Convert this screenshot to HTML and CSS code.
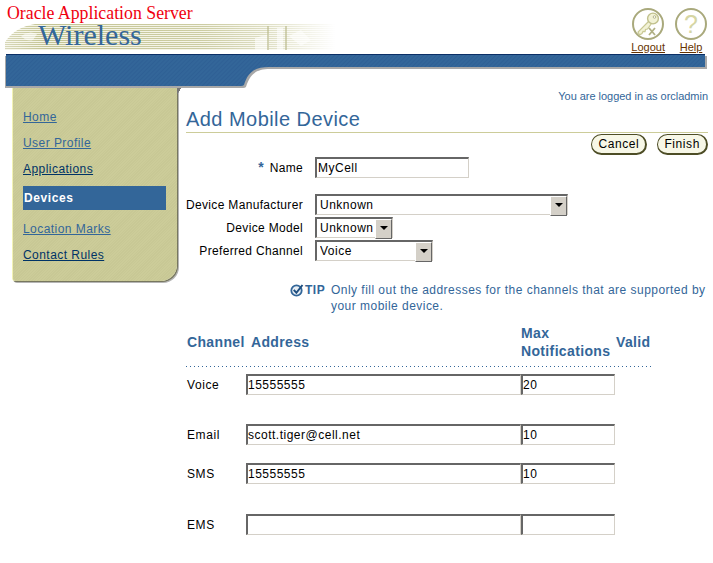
FILE: index.html
```html
<!DOCTYPE html>
<html lang="en">
<head>
<meta charset="utf-8">
<title>Add Mobile Device</title>
<link rel="stylesheet" href="styles.css">
</head>
<body>
<header class="masthead">
  <div class="brand">
    <div class="brand-oracle">Oracle Application Server</div>
    <div class="brand-band">
      <svg class="band-art" width="330" height="26" viewBox="0 0 330 26" aria-hidden="true">
        <path d="M0 0H30Q10 3 0 18Z" fill="#fff"/>
        <path d="M16 12Q24 6 32 10L28 16Q22 18 16 12Z" fill="#fff" opacity=".55"/>
        <path d="M250 26V14l14-4v16zM272 4h6v22h-6zM284 12l12-6 10 10-10 6z" fill="#fff" opacity=".55"/>
        <path d="M262 2h2v24h-2zM280 2h2v24h-2z" fill="#b9b98a" opacity=".6"/>
      </svg>
      <span class="brand-product">Wireless</span>
    </div>
  </div>
  <nav class="global-nav">
    <a class="global-link" href="#">
      <svg class="global-icon" width="32" height="32" viewBox="0 0 32 32" aria-hidden="true">
        <circle cx="16" cy="16" r="15" fill="#fff" stroke="#a9a97c" stroke-width="2"/>
        <path d="M16.5 13.5 6 24l1.5 3 2.5-1.5 1-2 2 .2.5-2.2 2-.5 4-5.5" fill="#f2f2d6" stroke="#c8c894" stroke-width="1.2"/>
        <circle cx="21" cy="10.5" r="5.4" fill="#f2f2d6" stroke="#c0c08c" stroke-width="1.4"/>
        <circle cx="22.5" cy="9" r="1.3" fill="#fff" stroke="#b5b58c"/>
        <path d="m17 20 6 7m0-7-6 7" stroke="#b0b084" stroke-width="1.8" fill="none"/>
      </svg>
      <span>Logout</span>
    </a>
    <a class="global-link" href="#">
      <svg class="global-icon" width="32" height="32" viewBox="0 0 32 32" aria-hidden="true">
        <circle cx="16" cy="16" r="15" fill="#fff" stroke="#a9a97c" stroke-width="2"/>
        <text x="16" y="25" text-anchor="middle" class="help-mark">?</text>
      </svg>
      <span>Help</span>
    </a>
  </nav>
</header>

<svg class="banner" width="713" height="34" viewBox="0 0 713 34" aria-hidden="true">
  <defs>
    <pattern id="weave" width="3" height="3" patternUnits="userSpaceOnUse" patternTransform="rotate(45)">
      <rect width="3" height="3" fill="#336699"/>
      <rect width="1" height="3" fill="#2f6095"/>
    </pattern>
  </defs>
  <path d="M5 2H707V15H270C256 15 250 20 246 33Q245 34 243 34H5Z" fill="#a8a8a8"/>
  <path d="M6 1H705V13H269C255 13 248 18 244 31Q243 32 241 32H6Z" fill="url(#weave)"/>
  <path d="M6 .5H705" stroke="#0b2f66" fill="none"/>
</svg>

<div class="page">
  <aside class="sidebar">
    <ul class="side-list">
      <li><a class="side-link" href="#">Home</a></li>
      <li><a class="side-link" href="#">User Profile</a></li>
      <li><a class="side-link visited" href="#">Applications</a></li>
      <li class="side-current">Devices</li>
      <li><a class="side-link" href="#">Location Marks</a></li>
      <li><a class="side-link visited" href="#">Contact Rules</a></li>
    </ul>
  </aside>

  <main class="content">
    <p class="login-note">You are logged in as orcladmin</p>
    <h1 class="title">Add Mobile Device</h1>
    <div class="actions">
      <button class="pill pill-cancel" type="button">Cancel</button>
      <button class="pill pill-finish" type="button">Finish</button>
    </div>

    <form class="device-form">
      <div class="field name-field">
        <label class="field-label"><span class="req">*</span> Name</label>
        <input class="box name-input" type="text" value="MyCell">
      </div>
      <div class="field">
        <label class="field-label">Device Manufacturer</label>
        <div class="select-wrap maker"><select class="box-select"><option>Unknown</option></select></div>
      </div>
      <div class="field">
        <label class="field-label">Device Model</label>
        <div class="select-wrap model"><select class="box-select"><option>Unknown</option></select></div>
      </div>
      <div class="field">
        <label class="field-label">Preferred Channel</label>
        <div class="select-wrap channel"><select class="box-select"><option>Voice</option></select></div>
      </div>
    </form>

    <div class="tip">
      <div class="tip-head">
        <svg width="14" height="14" viewBox="0 0 14 14" aria-hidden="true">
          <circle cx="6.5" cy="7.5" r="5.2" fill="#e8eef4" stroke="#336699" stroke-width="1.8"/>
          <path d="m3.8 6.8 2.6 3L12.5 2" fill="none" stroke="#1f4f80" stroke-width="2"/>
        </svg>
        <b>TIP</b>
      </div>
      <p class="tip-text">Only fill out the addresses for the channels that are supported by your mobile device.</p>
    </div>

    <div class="channels">
      <div class="ch-head">
        <span class="ch-title">Channel</span>
        <span class="ch-title">Address</span>
        <span class="ch-title">Max<br>Notifications</span>
        <span class="ch-title">Valid</span>
      </div>
      <div class="ch-row row-voice">
        <span>Voice</span>
        <input class="box" type="text" value="15555555">
        <input class="box" type="text" value="20">
      </div>
      <div class="ch-row row-email">
        <span>Email</span>
        <input class="box" type="text" value="scott.tiger@cell.net">
        <input class="box" type="text" value="10">
      </div>
      <div class="ch-row row-sms">
        <span>SMS</span>
        <input class="box" type="text" value="15555555">
        <input class="box" type="text" value="10">
      </div>
      <div class="ch-row row-ems">
        <span>EMS</span>
        <input class="box" type="text" value="">
        <input class="box" type="text" value="">
      </div>
    </div>
  </main>
</div>
</body>
</html>
```
FILE: styles.css
```css
* { box-sizing: border-box; }
html, body { margin: 0; padding: 0; background: #fff; }
body {
  width: 713px;
  height: 563px;
  overflow: hidden;
  font-family: "Liberation Sans", Arial, sans-serif;
  font-size: 12px;
  letter-spacing: .6px;
  color: #000;
}

/* masthead */
.masthead { display: flex; justify-content: space-between; height: 54px; padding-left: 5px; }
.brand { width: 330px; }
.brand-oracle {
  height: 24px;
  padding: 4px 0 0 2px;
  font-family: "Liberation Serif", "Times New Roman", serif;
  font-size: 17.8px;
  line-height: 19px;
  letter-spacing: 0;
  color: #f0000f;
}
.brand-band {
  position: relative;
  height: 26px;
  background:
    linear-gradient(90deg, rgba(255,255,255,.35) 0, rgba(255,255,255,0) 12%, rgba(255,255,255,.15) 60%, rgba(255,255,255,.45) 80%, #fff 100%),
    repeating-linear-gradient(180deg, #c4c494 0, #c4c494 1px, #f3f3e4 1px, #f3f3e4 2px);
}
.band-art { position: absolute; left: 0; top: 0; }
.brand-product {
  position: relative;
  display: block;
  padding-left: 33px;
  font-family: "Liberation Serif", "Times New Roman", serif;
  font-size: 30px;
  line-height: 22px;
  letter-spacing: 0;
  color: #336699;
}
.global-nav { display: flex; gap: 10px; padding: 8px 6px 0 0; }
.global-link {
  display: flex;
  flex-direction: column;
  align-items: center;
  font-size: 11px;
  line-height: 12px;
  letter-spacing: 0;
  color: #663300;
}
.global-icon { display: block; margin-bottom: 1px; }
.help-mark { font: 25px "Liberation Sans", Arial, sans-serif; fill: #d6d6a4; }

/* banner */
.banner { display: block; }

/* page layout */
.page { display: flex; align-items: flex-start; }

/* sidebar */
.sidebar {
  position: relative;
  width: 165px;
  height: 193px;
  margin-left: 12px;
  padding: 22px 11px 0 10px;
  background: repeating-linear-gradient(135deg, #cccc99 0, #cccc99 1px, #c8c895 1px, #c8c895 2px);
  border-left: 1px solid #f2f2b4;
  border-radius: 0 0 16px 3px;
  box-shadow: 1px 1px 0 #77775f, 2px 2px 0 #b5b5b5;
}
.sidebar::after {
  content: "";
  position: absolute;
  right: -4px;
  top: 0;
  width: 4px;
  height: 7px;
  background: linear-gradient(to bottom right, #777 50%, transparent 52%);
}
.side-list { list-style: none; margin: 0; padding: 0; letter-spacing: .45px; }
.side-list li { height: 26px; line-height: 14px; }
.side-link { color: #336699; }
.side-link.visited { color: #003366; }
.side-list .side-current {
  height: 24px;
  margin: -2px 0 12px;
  padding-left: 1px;
  background: #336699;
  color: #fff;
  font-weight: bold;
  line-height: 25px;
  letter-spacing: .6px;
}

/* main */
.content { width: 522px; margin-left: 9px; }
.login-note { margin: 2px 0 0; text-align: right; font-size: 11px; line-height: 13px; letter-spacing: -.03px; color: #336699; }
.title {
  margin: 3px 0 0;
  padding-bottom: 0;
  border-bottom: 1px solid #cccc99;
  font-size: 20px;
  line-height: 26px;
  font-weight: normal;
  letter-spacing: .45px;
  color: #336699;
}
.actions { display: flex; justify-content: flex-end; gap: 10px; margin-top: 1px; }
.pill {
  height: 21px;
  border: 1px solid #4d4d26;
  border-right-width: 2px;
  border-bottom-width: 2px;
  border-radius: 11px;
  background: #f7f7e7;
  font: 12px "Liberation Sans", Arial, sans-serif;
  letter-spacing: .6px;
  color: #000;
}
.pill-cancel { padding: 0 6px; }
.pill-finish { padding: 0 6px; }

/* form */
.device-form { margin-top: 2px; letter-spacing: .33px; }
.field { display: flex; align-items: center; gap: 12px; height: 23px; }
.field-label { width: 117px; text-align: right; white-space: nowrap; }
.name-field { height: 21px; margin-bottom: 15px; }
.req { margin-right: 2px; font-size: 14px; line-height: 12px; color: #336699; font-weight: bold; }
.box {
  height: 21px;
  padding: 0;
  border: 1px solid #d4d0c8;
  border-top: 2px solid #666;
  border-left: 2px solid #666;
  border-radius: 0;
  background: #fff;
  font: 12px "Liberation Sans", Arial, sans-serif;
  letter-spacing: .5px;
  color: #000;
  outline: none;
}
.name-input { width: 154px; padding-left: 1px; }
.select-wrap { position: relative; height: 21px; }
.select-wrap::after {
  content: "";
  position: absolute;
  right: 1px;
  top: 2px;
  width: 15px;
  height: 18px;
  background: #d4d0c8;
  border: 1px solid;
  border-color: #fff #666 #666 #fff;
}
.select-wrap::before {
  content: "";
  position: absolute;
  z-index: 1;
  right: 5px;
  top: 9px;
  border: 4px solid transparent;
  border-top: 4px solid #000;
  border-bottom: 0;
}
.maker { width: 253px; }
.model { width: 78px; }
.channel { width: 118px; }
.box-select {
  appearance: none;
  -webkit-appearance: none;
  display: block;
  width: 100%;
  height: 21px;
  padding: 0 0 0 3px;
  border: 1px solid #d4d0c8;
  border-top: 2px solid #666;
  border-left: 2px solid #666;
  border-radius: 0;
  background: #fff;
  font: 12px "Liberation Sans", Arial, sans-serif;
  letter-spacing: .5px;
  color: #000;
}

/* tip */
.tip { display: flex; margin: 20px 0 0 104px; color: #336699; line-height: 16px; }
.tip-head { display: flex; align-items: flex-start; gap: 1px; flex: none; width: 41px; }
.tip-head svg { margin-top: 1px; flex: none; }
.tip-head b { letter-spacing: .5px; }
.tip-text { margin: 0; font-size: 12px; letter-spacing: .47px; }

/* channel table */
.channels { margin-top: 3px; width: 465px; }
.ch-head {
  display: grid;
  grid-template-columns: 64px 270px 95px 1fr;
  align-items: center;
  height: 50px;
  padding: 0 0 1px 1px;
  background: linear-gradient(90deg, #336699 1px, transparent 1px) left bottom / 4px 1px repeat-x;
}
.ch-title { font-weight: bold; font-size: 14px; line-height: 18px; letter-spacing: .35px; color: #336699; white-space: nowrap; }
.ch-row { display: grid; grid-template-columns: 59px 275px 94px; align-items: center; padding-left: 1px; }
.ch-row .box { width: 100%; }
.row-voice { margin-top: 7px; }
.row-email { margin-top: 29px; }
.row-sms { margin-top: 18px; }
.row-ems { margin-top: 30px; }
```
